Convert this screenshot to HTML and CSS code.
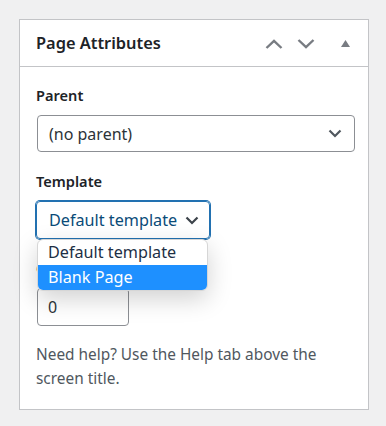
FILE: index.html
```html
<!DOCTYPE html>
<html lang="en">
<head>
<meta charset="utf-8">
<title>Page Attributes</title>
<link rel="stylesheet" href="styles.css">
</head>
<body>
<div class="postbox">
  <div class="postbox-header">
    <h2 class="postbox-title">Page Attributes</h2>
    <div class="handle-actions">
      <span class="handle-btn">
        <svg width="18" height="10" viewBox="0 0 18 10"><path d="M1.5 9 L9 1.8 L16.5 9" fill="none" stroke="#787c82" stroke-width="2.4"/></svg>
      </span>
      <span class="handle-btn">
        <svg width="18" height="10" viewBox="0 0 18 10"><path d="M1.5 1 L9 8.2 L16.5 1" fill="none" stroke="#787c82" stroke-width="2.4"/></svg>
      </span>
      <span class="handle-btn toggle">
        <svg width="9" height="8" viewBox="0 0 9 8"><path d="M4.5 0 L9 7 L0 7 Z" fill="#787c82"/></svg>
      </span>
    </div>
  </div>
  <div class="inside">
    <p class="field-label">Parent</p>
    <div class="select select-wide">
      <span class="select-value">(no parent)</span>
      <svg class="chev" width="14" height="9" viewBox="0 0 14 9"><path d="M1.5 1.5 L7 7 L12.5 1.5" fill="none" stroke="#50575e" stroke-width="2.2"/></svg>
    </div>
    <p class="field-label">Template</p>
    <div class="template-wrap">
      <div class="select select-focus">
        <span class="select-value">Default template</span>
        <svg class="chev" width="14" height="9" viewBox="0 0 14 9"><path d="M1.5 1.5 L7 7 L12.5 1.5" fill="none" stroke="#3c434a" stroke-width="2.2"/></svg>
      </div>
      <ul class="dropdown">
        <li class="option">Default template</li>
        <li class="option selected">Blank Page</li>
      </ul>
    </div>
    <p class="field-label">Order</p>
    <div class="number-input">0</div>
    <p class="help">Need help? Use the Help tab above the screen title.</p>
  </div>
</div>
</body>
</html>
```

FILE: styles.css
```css
* {
  box-sizing: border-box;
}

body {
  margin: 0;
  background: #f0f0f1;
  font-family: "Noto Sans", "Open Sans", sans-serif;
  color: #1d2327;
}

.postbox {
  margin: 19px 0 0 19px;
  width: 350px;
  background: #fff;
  border: 1px solid #c3c4c7;
}

.postbox-header {
  display: flex;
  align-items: center;
  justify-content: space-between;
  height: 47px;
  border-bottom: 1px solid #c3c4c7;
  padding: 0 16px 0 16px;
}

.postbox-title {
  margin: 0;
  font-size: 16.4px;
  font-weight: 600;
  color: #1d2327;
  line-height: 1;
}

.handle-actions {
  display: flex;
  align-items: center;
  gap: 14px;
  margin-top: 2px;
}

.handle-btn {
  display: flex;
  align-items: center;
  justify-content: center;
}

.handle-btn.toggle {
  margin-left: 12px;
  margin-right: 2px;
}

.inside {
  padding: 18px 15px 18px 16px;
}

.field-label {
  margin: 0 0 10px;
  font-size: 14.6px;
  font-weight: 600;
  line-height: 20px;
  color: #1d2327;
}

.select {
  display: flex;
  align-items: center;
  justify-content: space-between;
  height: 37px;
  border: 1px solid #8c8f94;
  border-radius: 4px;
  padding: 0 12px 0 11px;
  font-size: 16px;
  color: #2c3338;
  margin-bottom: 19px;
}

.select-wide {
  width: 318px;
  margin-left: 1px;
}

.template-wrap {
  position: relative;
  width: 174px;
}

.select-focus {
  height: 38px;
  border: 1px solid #2271b1;
  box-shadow: 0 0 0 1px #2271b1;
  color: #0a4b78;
  padding: 0 10px 0 12px;
  font-size: 16.2px;
}

.chev {
  flex: none;
}

.dropdown {
  position: absolute;
  left: 1px;
  top: 38px;
  width: 171px;
  margin: 0;
  padding: 0;
  list-style: none;
  background: #fff;
  border: 1px solid #d6d6d6;
  border-radius: 6px;
  overflow: hidden;
  box-shadow: 0 8px 24px rgba(0, 0, 0, 0.18);
  z-index: 2;
}

.option {
  height: 25px;
  line-height: 25px;
  padding: 0 10px;
  font-size: 16.2px;
  color: #1d2f45;
}

.option.selected {
  background: #1e90ff;
  color: #fff;
}

.number-input {
  width: 92px;
  height: 38px;
  margin-left: 1px;
  border: 1px solid #8c8f94;
  border-radius: 4px;
  padding: 0 10px;
  font-size: 16px;
  line-height: 36px;
  color: #2c3338;
}

.help {
  margin: 17px 0 0;
  font-size: 15.4px;
  line-height: 24px;
  color: #50575e;
}
```
